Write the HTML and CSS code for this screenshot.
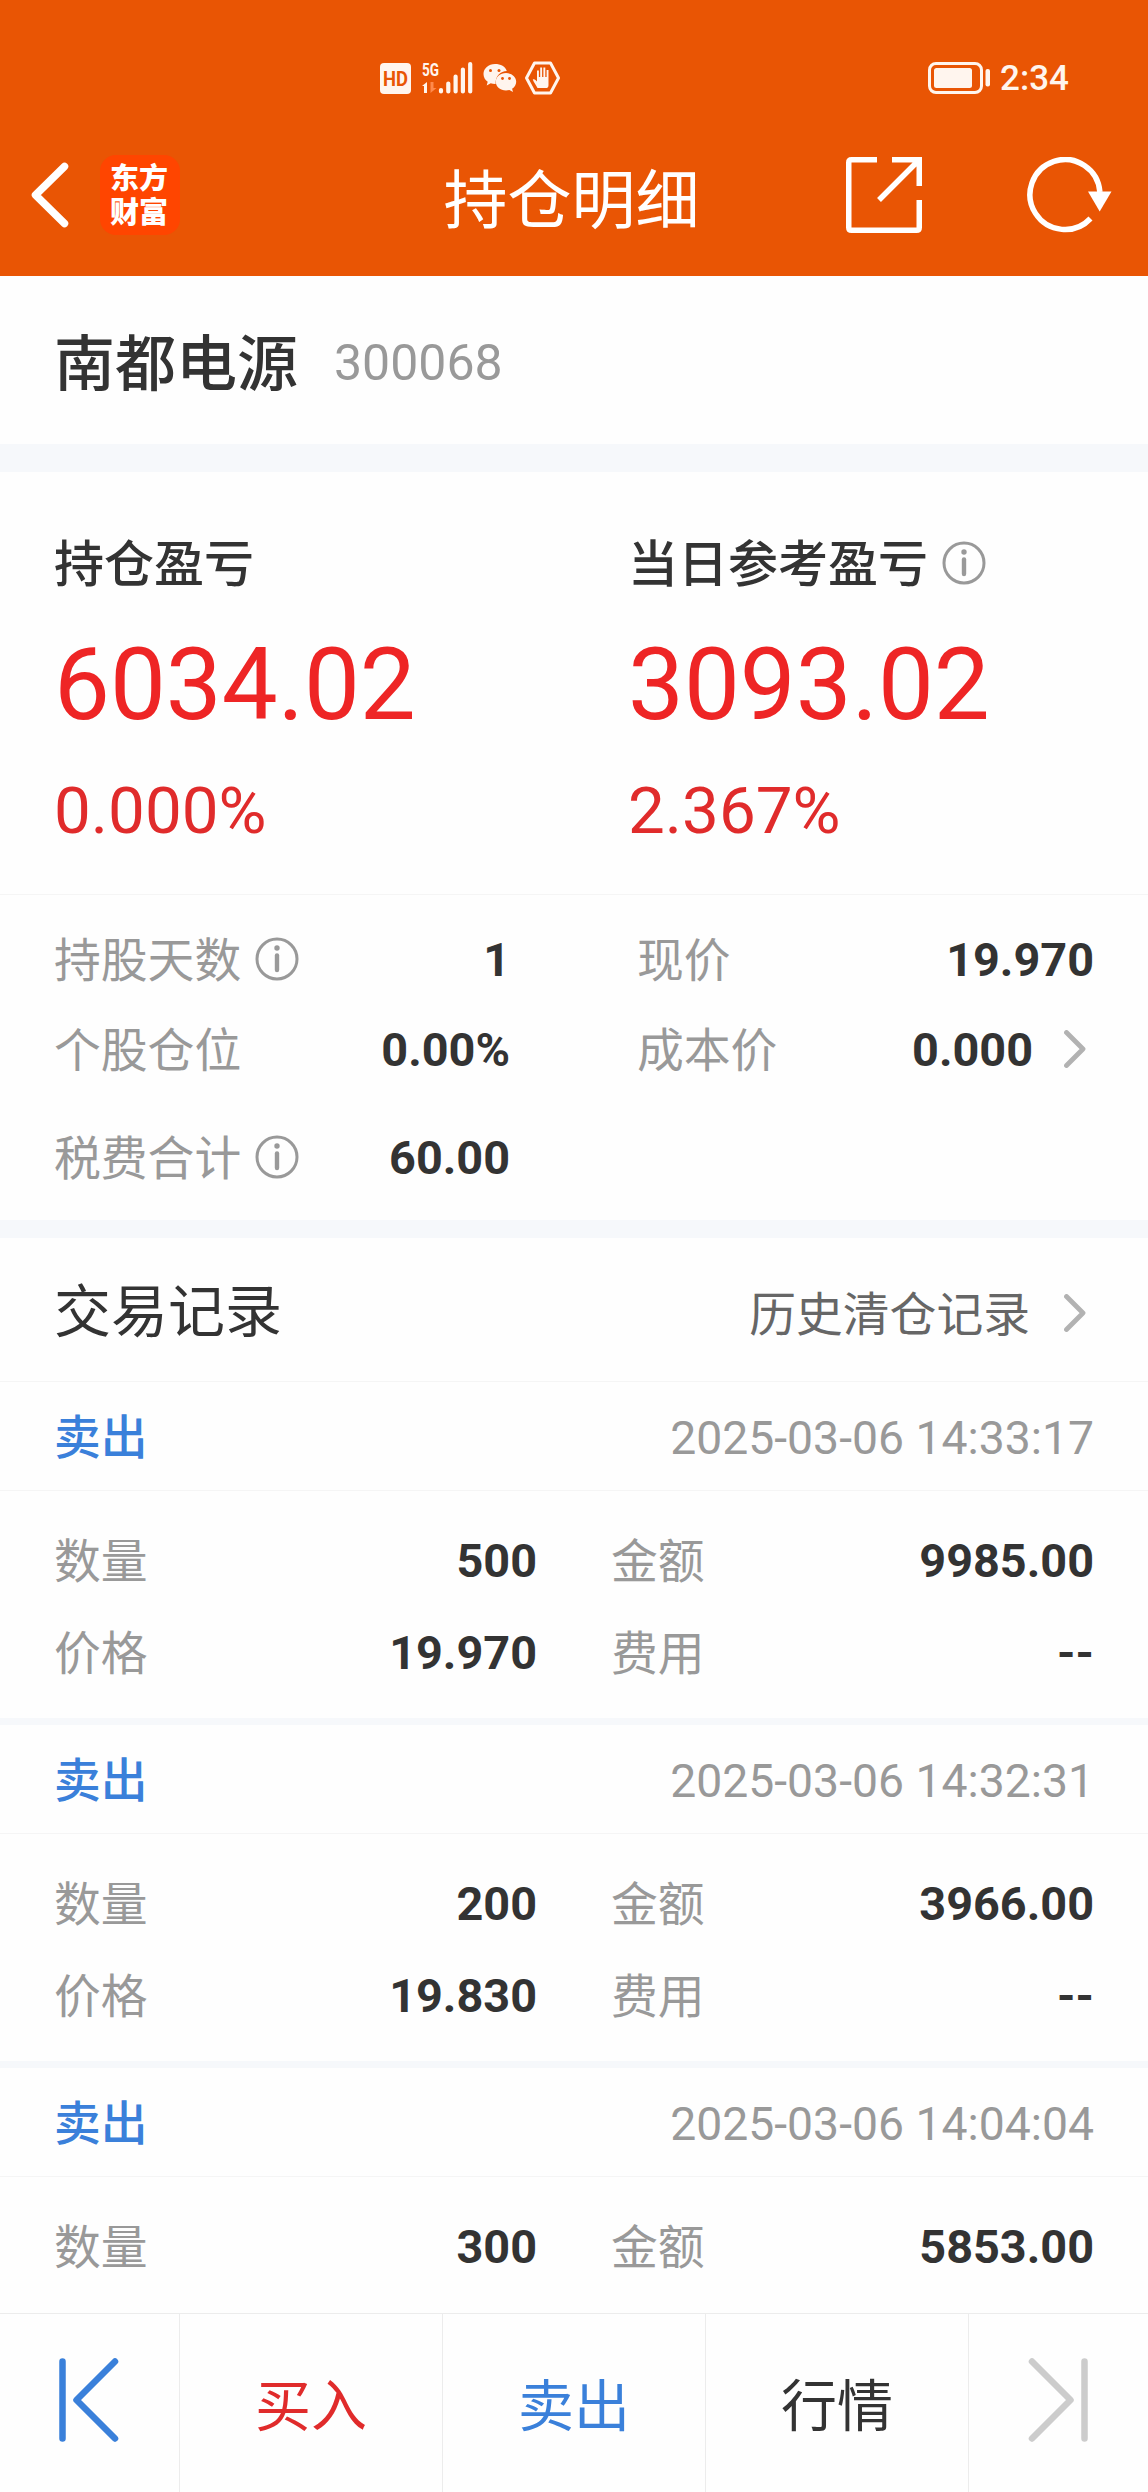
FILE: index.html
```html
<!DOCTYPE html>
<html lang="zh-CN">
<head>
    <meta charset="UTF-8">
    <meta name="viewport" content="width=device-width, initial-scale=1.0">
    <title>持仓明细</title>
    <link rel="stylesheet" href="styles.css">
</head>
<body>
    <svg class="defs">
        <symbol id="info" viewBox="0 0 44 44">
            <circle cx="22" cy="22" r="20" fill="none" stroke="#999" stroke-width="3"/>
            <circle cx="22" cy="11" r="2.7" fill="#999"/>
            <path d="M22 18.5v14.5" stroke="#999" stroke-width="4.4" stroke-linecap="round"/>
        </symbol>
        <symbol id="chevron" viewBox="0 0 22 38">
            <path d="M2.5 2.5L19 19L2.5 35.5" fill="none" stroke="#b2b2b2" stroke-width="4.8" stroke-linecap="round" stroke-linejoin="round"/>
        </symbol>
    </svg>

    <header class="header">
        <div class="status-bar">
            <svg class="status-icons" width="184" height="36" viewBox="0 0 184 36">
                <rect x="0" y="3" width="31" height="31" rx="4" fill="#fff5ee"/>
                <text class="hd-text" x="3" y="25.500" textLength="25" lengthAdjust="spacingAndGlyphs">HD</text>
                <text class="net-text" x="42" y="16" textLength="17" lengthAdjust="spacingAndGlyphs">5G</text>
                <path d="M42 26l5-4v11h-3V26z" fill="#fff5ee"/>
                <path d="M50.500 22v11l6-5h-3v-6z" fill="#ff8a4c"/>
                <g stroke="#fff5ee" stroke-width="4.200" stroke-linecap="round">
                    <path d="M61 30v1.500M68.300 23.500v8M75.600 16.500v15M82.900 9.500v22M90.200 4v27.500"/>
                </g>
                <path d="M115 4c-6.500 0-11.500 4.500-11.500 10 0 3.200 1.600 6 4.200 7.800l-1 3.700 4-2.200c1.400.4 2.800.7 4.300.7h.6c-.3-8 5-13 11.200-13C125.500 6.500 120.700 4 115 4z" fill="#fff5ee"/>
                <path d="M126 13c-5.700 0-10.200 3.800-10.200 8.700s4.500 8.700 10.200 8.700c1.200 0 2.400-.2 3.400-.5l3.600 2-.9-3.200c2.500-1.600 4.100-4.100 4.100-7C136.200 16.800 131.700 13 126 13z" fill="#fff5ee"/>
                <g fill="#e95504">
                    <circle cx="110.500" cy="10.500" r="1.500"/><circle cx="119" cy="10.500" r="1.500"/>
                    <circle cx="122.500" cy="18.500" r="1.400"/><circle cx="129.500" cy="18.500" r="1.400"/>
                </g>
                <path d="M154.500 3h16l8 15-8 15h-16l-8-15z" fill="none" stroke="#fff5ee" stroke-width="3" stroke-linejoin="round"/>
                <path d="M157.500 28c-1.500-3-4-6-4.700-8.500 1.500-1 3 .5 4.200 2V10.500h1.900V17h1.300V7.500h1.900V17h1.300V7.500h1.900V17h1.300V10h1.900v15c0 1.500-.5 2.500-1.500 3z" fill="#fff5ee"/>
            </svg>
            <svg class="battery" width="64" height="34" viewBox="0 0 64 34">
                <rect x="1.500" y="2.500" width="52" height="29" rx="6.500" fill="none" stroke="#fff5ee" stroke-width="3"/>
                <rect x="6" y="7" width="38" height="20" rx="2.500" fill="#fff5ee"/>
                <rect x="57.500" y="8" width="4.500" height="17.500" rx="2" fill="#fff5ee"/>
            </svg>
            <span class="clock">2:34</span>
        </div>
        <div class="nav-bar">
            <div class="nav-left">
                <svg width="40" height="68" viewBox="0 0 40 68">
                    <path d="M34.500 5.500L5.500 34L34.500 62.500" fill="none" stroke="#fff" stroke-width="7.500" stroke-linecap="round" stroke-linejoin="round"/>
                </svg>
                <div class="logo"><span>东方</span><span>财富</span></div>
            </div>
            <h1 class="title">持仓明细</h1>
            <div class="nav-right">
                <svg width="76" height="76" viewBox="0 0 76 76" fill="none" stroke="#fff" stroke-width="5.500">
                    <path d="M31 2.750H5.500Q2.750 2.750 2.750 5.500V70.500Q2.750 73.250 5.500 73.250H70.500Q73.250 73.250 73.250 70.500V43"/>
                    <path d="M46 2.750H73.250V29M72 4L33 43"/>
                </svg>
                <svg width="86" height="76" viewBox="0 0 86 76">
                    <path d="M72.900 35A35 35 0 1 0 63.500 61.500" fill="none" stroke="#fff" stroke-width="5.500"/>
                    <path d="M61 34.500H84.500L72.700 54.500z" fill="#fff"/>
                </svg>
            </div>
        </div>
    </header>

    <main class="content">
        <section class="stock">
            <span class="stock-name">南都电源</span>
            <span class="stock-code">300068</span>
        </section>

        <section class="profit">
            <div class="profit-item">
                <div class="profit-label">持仓盈亏</div>
                <div class="profit-value">6034.02</div>
                <div class="profit-rate">0.000%</div>
            </div>
            <div class="profit-item">
                <div class="profit-label">当日参考盈亏<svg class="info"><use href="#info"/></svg></div>
                <div class="profit-value">3093.02</div>
                <div class="profit-rate">2.367%</div>
            </div>
        </section>

        <section class="stats">
            <div class="cell"><span class="label">持股天数</span><svg class="info"><use href="#info"/></svg><b>1</b></div>
            <div class="cell"><span class="label">现价</span><b>19.970</b></div>
            <div class="cell"><span class="label">个股仓位</span><b>0.00%</b></div>
            <div class="cell"><span class="label">成本价</span><b>0.000</b><svg class="chevron"><use href="#chevron"/></svg></div>
            <div class="cell last"><span class="label">税费合计</span><svg class="info"><use href="#info"/></svg><b>60.00</b></div>
        </section>

        <section class="records">
            <div class="records-head">
                <h2>交易记录</h2>
                <span class="history">历史清仓记录</span>
                <svg class="chevron"><use href="#chevron"/></svg>
            </div>

            <div class="record">
                <div class="record-head"><span class="sell">卖出</span><span class="time">2025-03-06 14:33:17</span></div>
                <div class="record-body">
                    <div class="cell"><span class="label">数量</span><b>500</b></div>
                    <div class="cell"><span class="label">金额</span><b>9985.00</b></div>
                    <div class="cell"><span class="label">价格</span><b>19.970</b></div>
                    <div class="cell"><span class="label">费用</span><b>--</b></div>
                </div>
            </div>

            <div class="record">
                <div class="record-head"><span class="sell">卖出</span><span class="time">2025-03-06 14:32:31</span></div>
                <div class="record-body">
                    <div class="cell"><span class="label">数量</span><b>200</b></div>
                    <div class="cell"><span class="label">金额</span><b>3966.00</b></div>
                    <div class="cell"><span class="label">价格</span><b>19.830</b></div>
                    <div class="cell"><span class="label">费用</span><b>--</b></div>
                </div>
            </div>

            <div class="record">
                <div class="record-head"><span class="sell">卖出</span><span class="time">2025-03-06 14:04:04</span></div>
                <div class="record-body">
                    <div class="cell"><span class="label">数量</span><b>300</b></div>
                    <div class="cell"><span class="label">金额</span><b>5853.00</b></div>
                </div>
            </div>
        </section>
    </main>

    <footer class="footer">
        <div class="tab prev">
            <svg width="60" height="84" viewBox="0 0 60 84" fill="none" stroke="#3a80da" stroke-width="6.500" stroke-linecap="round" stroke-linejoin="round">
                <path d="M3.500 3.500V80.500M56 3.500L17.500 42L56 80.500"/>
            </svg>
        </div>
        <div class="tab buy">买入</div>
        <div class="tab sell">卖出</div>
        <div class="tab">行情</div>
        <div class="tab next">
            <svg width="60" height="84" viewBox="0 0 60 84" fill="none" stroke="#ccc" stroke-width="6.500" stroke-linecap="round" stroke-linejoin="round">
                <path d="M56.500 3.500V80.500M4 3.500L42.500 42L4 80.500"/>
            </svg>
        </div>
    </footer>
</body>
</html>
```
FILE: styles.css
```css
* {
    box-sizing: border-box;
}

body {
    margin: 0;
    width: 1148px;
    height: 2492px;
    display: flex;
    flex-direction: column;
    overflow: hidden;
    background-color: #fefefe;
    color: #333;
    font-family: Roboto, "Noto Sans CJK SC", sans-serif;
    font-size: 46.8px;
    line-height: 1.2;
}

svg {
    display: block;
    flex: none;
}

.defs {
    display: none;
}

/* header */
.header {
    flex: none;
    height: 276px;
    background-color: #e95504;
    color: #fff;
}

.status-bar {
    display: flex;
    align-items: center;
    height: 116px;
    padding: 40px 79px 0 380px;
}

.status-icons {
    margin-right: auto;
    overflow: visible;
}

.hd-text {
    font-size: 20px;
    font-weight: 700;
    fill: #e95504;
}

.net-text {
    font-size: 19px;
    font-weight: 700;
    fill: #fff5ee;
}

.clock {
    margin: 2px 0 0 8px;
    font-size: 35px;
    font-weight: 500;
    color: #fff5ee;
}

.nav-bar {
    display: grid;
    grid-template-columns: 1fr auto 1fr;
    align-items: center;
    height: 158px;
    padding: 0 35px 0 30px;
}

.nav-left, .nav-right {
    display: flex;
    align-items: center;
}

.nav-left {
    gap: 30px;
}

.nav-right {
    justify-content: flex-end;
    gap: 105px;
}

.logo {
    display: flex;
    flex-direction: column;
    justify-content: center;
    width: 80px;
    height: 80px;
    padding: 1px 2px 0 0;
    border-radius: 16px;
    background-color: #ff4500;
    font-size: 29px;
    font-weight: 900;
    line-height: 34px;
    text-align: center;
}

.title {
    margin: 14px 0 0;
    font-size: 64px;
    font-weight: 400;
}

/* scrolling content */
.content {
    flex: 1;
    min-height: 0;
    overflow: hidden;
}

.stock {
    display: flex;
    align-items: center;
    gap: 36px;
    height: 196px;
    padding: 5px 54px 0;
    border-bottom: 28px solid #f6f8fb;
}

.stock-name {
    margin-top: 7px;
    font-size: 61px;
    font-weight: 500;
}

.stock-code {
    font-size: 50px;
    color: #999;
}

.profit {
    display: grid;
    grid-template-columns: 1fr 1fr;
    height: 423px;
    border-bottom: 1px solid #f5f5f5;
}

.profit-item {
    padding: 63px 0 0 54px;
}

.profit-label {
    display: flex;
    align-items: center;
    height: 60px;
    font-size: 50px;
    font-weight: 500;
}

.profit-value {
    margin-top: 30px;
    font-size: 99.500px;
    line-height: 120px;
    color: #ee2525;
}

.profit-rate {
    margin-top: 26px;
    font-size: 65.500px;
    line-height: 80px;
    color: #e02b2b;
}

.info {
    width: 44px;
    height: 44px;
    margin: -5px 0 0 14px;
}

.cell {
    display: flex;
    align-items: center;
}

.cell b {
    margin: -2px 0 0 auto;
}

.label {
    color: #999;
}

.chevron {
    width: 22px;
    height: 38px;
    margin-right: 8px;
}

.stats {
    display: grid;
    grid-template-columns: 456px 457px;
    column-gap: 127px;
    grid-auto-rows: 90px;
    height: 343px;
    padding: 21px 54px 0;
    border-bottom: 18px solid #f6f8fb;
}

.stats .last {
    margin-top: 18px;
    height: 90px;
}

.stats .chevron {
    margin-top: -5px;
    margin-left: 31px;
}

/* trade records */
.records-head {
    display: flex;
    align-items: center;
    height: 144px;
    padding: 6px 54px 0;
    border-bottom: 1px solid #f5f5f5;
}

.records-head h2 {
    margin: 2px auto 0 0;
    font-size: 57px;
    font-weight: 400;
}

.history {
    margin: 5px 34px 0 0;
    color: #666;
}

.record {
    height: 343px;
    border-bottom: 7px solid #f6f8fb;
}

.record-head {
    display: flex;
    align-items: center;
    justify-content: space-between;
    height: 109px;
    padding: 5px 54px 0;
    border-bottom: 1px solid #f5f5f5;
}

.time {
    font-size: 46.300px;
    color: #999;
}

.sell {
    color: #3a80da;
}

.record-head .sell {
    font-weight: 500;
}

.record-body {
    display: grid;
    grid-template-columns: 483px 483px;
    column-gap: 74px;
    grid-auto-rows: 92px;
    padding: 25px 54px 0;
}

/* bottom bar */
.footer {
    flex: none;
    display: grid;
    grid-template-columns: 180px 263px 263px 263px 1fr;
    height: 179px;
    border-top: 1px solid #ececec;
    background-color: #fefefe;
}

.tab {
    display: flex;
    align-items: center;
    justify-content: center;
    padding-top: 10px;
    border-right: 1px solid #ececec;
    font-size: 56px;
}

.tab.buy {
    color: #e02b2b;
}

.tab.prev, .tab.next {
    padding: 0 1px 6px 0;
}

.tab.next {
    border-right: none;
}
```
